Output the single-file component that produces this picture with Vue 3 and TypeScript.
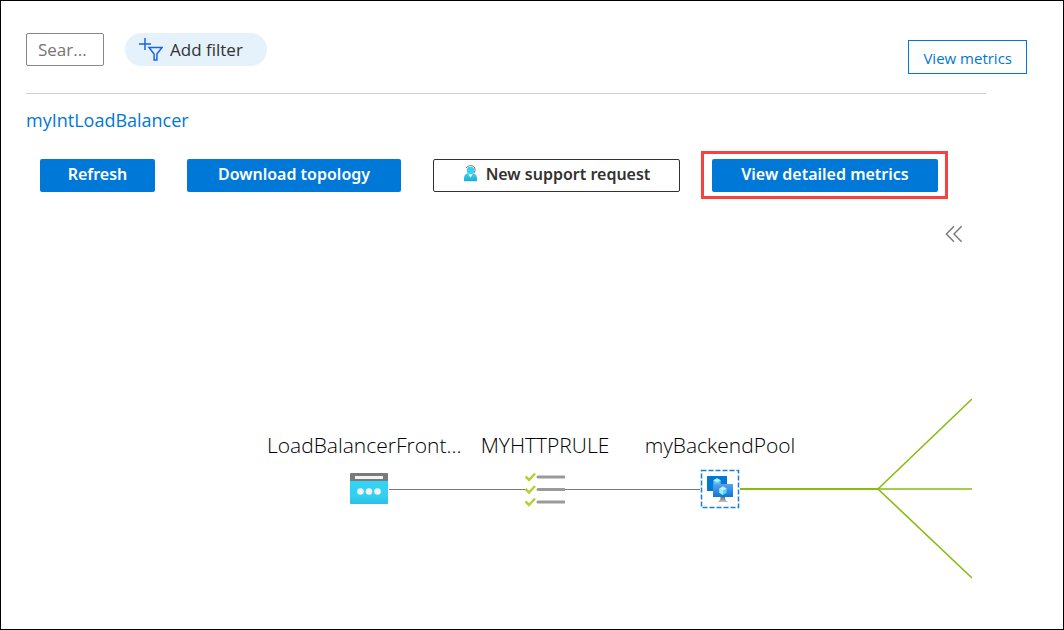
<script setup lang="ts">
interface TopologyNode {
  id: string
  label: string
  truncated: boolean
  x: number
  y: number
}

interface Link {
  x1: number
  y1: number
  x2: number
  y2: number
  kind: 'neutral' | 'trunk' | 'branch'
}

const nodes: TopologyNode[] = [
  { id: 'frontend', label: 'LoadBalancerFront...', truncated: true, x: 343, y: 269 },
  { id: 'rule', label: 'MYHTTPRULE', truncated: false, x: 519, y: 269 },
  { id: 'pool', label: 'myBackendPool', truncated: false, x: 694, y: 269 },
]

const links: Link[] = [
  { x1: 363, y1: 269, x2: 500, y2: 269, kind: 'neutral' },
  { x1: 539, y1: 269, x2: 674, y2: 269, kind: 'neutral' },
  { x1: 714, y1: 269, x2: 852, y2: 269, kind: 'trunk' },
  { x1: 852, y1: 269, x2: 946, y2: 269, kind: 'branch' },
  { x1: 852, y1: 269, x2: 946, y2: 179, kind: 'branch' },
  { x1: 852, y1: 269, x2: 946, y2: 358, kind: 'branch' },
]
</script>

<template>
  <main class="page">
    <header class="filters">
      <input class="search" type="text" placeholder="Sear..." aria-label="Search" />
      <button class="add-filter" type="button">
        <svg width="24" height="24" viewBox="0 0 24 24" aria-hidden="true">
          <g fill="none" stroke="#1a66d9">
            <path d="M6 0v12M0 6h12" stroke-width="1.500" />
            <path d="M10 9.500h13l-5.100 6.600v5.900h-2.800v-5.900z" stroke-width="1.500" />
          </g>
        </svg>
        <span>Add filter</span>
      </button>
      <button class="view-metrics" type="button">View metrics</button>
    </header>

    <section class="content">
      <a class="resource" href="#">myIntLoadBalancer</a>

      <div class="actions">
        <button class="action primary" type="button">Refresh</button>
        <button class="action primary" type="button">Download topology</button>
        <button class="action support" type="button">
          <svg width="15" height="18" viewBox="0 0 15 18" aria-hidden="true">
            <defs>
              <linearGradient id="person" x1="0" y1="0" x2="0" y2="1">
                <stop offset="0" stop-color="#35d3f3" />
                <stop offset="1" stop-color="#20acd2" />
              </linearGradient>
            </defs>
            <path d="M1 16.200v-2.500Q1 9 5 8.300h5q4 .7 4 5.400v2.500z" fill="url(#person)" />
            <path d="M5.200 8.800h4.600L7.500 12.800z" fill="#fff" />
            <circle cx="7.500" cy="5.500" r="3.700" fill="#32d4f5" />
            <path d="M3.300 3C5-.2 10.500-.2 11.800 3q1 3-.8 4.900" fill="none" stroke="#777" />
          </svg>
          <span>New support request</span>
        </button>
        <button class="action primary highlighted" type="button">View detailed metrics</button>
      </div>
    </section>

    <section class="topology" aria-label="Topology">
      <button class="collapse" type="button" aria-label="Collapse panel">
        <svg width="18" height="18" viewBox="0 0 18 18" aria-hidden="true">
          <path d="M9 1.200L1.400 9 9 16.800M16.600 1.200L9 9l7.600 7.800" fill="none" stroke="#777" stroke-width="1.400" />
        </svg>
      </button>

      <svg class="links" width="946" height="380" viewBox="0 0 946 380" aria-hidden="true">
        <line
          v-for="(link, i) in links"
          :key="i"
          :x1="link.x1"
          :y1="link.y1"
          :x2="link.x2"
          :y2="link.y2"
          :class="link.kind"
        />
      </svg>

      <div
        v-for="node in nodes"
        :key="node.id"
        class="node"
        :style="{ left: node.x + 'px', top: node.y + 'px' }"
      >
        <span class="label" :class="{ truncated: node.truncated }">{{ node.label }}</span>
        <svg v-if="node.id === 'frontend'" width="40" height="40" viewBox="0 0 40 40" aria-hidden="true">
          <defs>
            <linearGradient id="front" x1="0" y1="0" x2="0" y2="1">
              <stop offset="0" stop-color="#32d4f5" />
              <stop offset=".7" stop-color="#32cff0" />
              <stop offset="1" stop-color="#2bbfe2" />
            </linearGradient>
          </defs>
          <path d="M1 11h38v23q0 1-1 1H2q-1 0-1-1z" fill="url(#front)" />
          <path d="M1 12V5q0-1 1-1h36q1 0 1 1v7z" fill="#7a7a7a" />
          <path d="M6 7h28v3H6z" fill="#f2f2f2" />
          <g fill="#f2f2f2">
            <circle cx="11.500" cy="22.500" r="3.300" />
            <circle cx="20" cy="22.500" r="3.300" />
            <circle cx="28.500" cy="22.500" r="3.300" />
          </g>
        </svg>
        <svg v-else-if="node.id === 'rule'" width="40" height="40" viewBox="0 0 40 40" aria-hidden="true">
          <g fill="none" stroke="#999b9b" stroke-width="3" stroke-linecap="round">
            <path d="M13 8h26M13 20.500h26M13 33h26" />
          </g>
          <path
            d="M.5 7.500l3.500 3.500L10 4.500M.5 20l3.500 3.500L10 17M.5 32.500l3.500 3.500L10 29.500"
            fill="none"
            stroke="#b4d22d"
            stroke-width="2.500"
          />
        </svg>
        <svg v-else width="40" height="40" viewBox="0 0 40 40" aria-hidden="true">
          <defs>
            <linearGradient id="screen" x1="0" y1="1" x2="0" y2="0">
              <stop offset="0" stop-color="#0c78d4" />
              <stop offset="1" stop-color="#5ea0ef" />
            </linearGradient>
            <linearGradient id="stand" x1="0" y1="0" x2="0" y2="1">
              <stop offset="0" stop-color="#707070" />
              <stop offset="1" stop-color="#c4c4c4" />
            </linearGradient>
          </defs>
          <path d="M1.500 1.500h37v37h-37z" fill="#fff" stroke="#1a7fd4" stroke-width="1.500" stroke-dasharray="5 2" />
          <rect x="7" y="7" width="20" height="15" rx=".5" fill="#0078d4" />
          <path d="M17 9.300l3.700 2v4.500L17 18l-3.700-2.200v-4.500z" fill="#50c5f2" />
          <path d="M17 9.300l3.700 2-3.700 2.200-3.700-2.200z" fill="#b4ecfa" />
          <path d="M20.500 28H25q0 4 2.500 4.300v.7H18v-.7q2.500-.3 2.500-4.300z" fill="url(#stand)" />
          <rect x="13" y="15" width="20" height="13" rx=".5" fill="url(#screen)" />
          <path d="M23 17.500l3.700 2v4.300L23 26l-3.700-2.200v-4.300z" fill="#50d5f5" />
          <path d="M23 17.500l3.700 2-3.700 2.200-3.700-2.200z" fill="#c5f2fc" />
          <path d="M23 21.700V26l-3.700-2.200v-4.300z" fill="#9cebff" />
        </svg>
      </div>
    </section>
  </main>
</template>

<style>
body {
  margin: 0;
  background: #fff;
}
</style>

<style scoped>
.page {
  box-sizing: border-box;
  min-height: 100vh;
  padding: 32px 25px 0;
  border: 1px solid #000;
  font-family: "Open Sans", "Noto Sans", sans-serif;
  color: #323130;
}

button,
input {
  box-sizing: border-box;
  margin: 0;
  font-family: inherit;
}

button {
  cursor: pointer;
}

.filters {
  display: flex;
  align-items: flex-start;
  margin-right: 11px;
}

.search {
  width: 78px;
  height: 33px;
  padding: 0 11px;
  border: 1px solid #8a8886;
  border-radius: 2px;
  font-size: 17px;
  color: #323130;
}

.search::placeholder {
  color: #767472;
  opacity: 1;
}

.add-filter {
  display: flex;
  align-items: center;
  gap: 7px;
  height: 33px;
  margin-left: 21px;
  padding: 0 24px 0 14px;
  border: 0;
  border-radius: 17px;
  background: #e5f1fb;
  font-size: 17px;
  color: #323130;
}

.view-metrics {
  height: 34px;
  margin: 7px 0 0 auto;
  padding: 2px 14px 0;
  border: 1px solid #0078d4;
  background: #fff;
  font-size: 15px;
  color: #0078d4;
}

.content {
  margin-right: 52px;
  margin-top: 19px;
  border-top: 1px solid #d2d0ce;
}

.resource {
  display: block;
  width: fit-content;
  margin-top: 14px;
  font-size: 18px;
  line-height: 24px;
  color: #0078d4;
  text-decoration: none;
}

.actions {
  display: grid;
  grid-template-columns: 115px 214px 247px 226px;
  gap: 32px;
  margin: 27px 0 0 14px;
}

.action {
  display: flex;
  align-items: center;
  justify-content: center;
  gap: 8px;
  height: 33px;
  padding: 0 0 4px;
  border: 0;
  border-radius: 2px;
  font-family: "Noto Sans", "Open Sans", sans-serif;
  font-size: 16px;
  font-weight: 600;
  white-space: nowrap;
}

.primary {
  background: #0078d7;
  color: #fff;
}

.support {
  border: 1px solid #323130;
  background: #fff;
  color: #323130;
}

.highlighted {
  position: relative;
}

.highlighted::after {
  content: "";
  position: absolute;
  inset: -8px -10px -7px -11px;
  border: 3px solid #f94141;
}

.topology {
  position: relative;
  box-sizing: border-box;
  min-height: 380px;
  margin-top: 28px;
  padding-top: 5px;
}

.collapse {
  display: block;
  width: 18px;
  height: 18px;
  margin: 0 75px 0 auto;
  padding: 0;
  border: 0;
  background: none;
}

.collapse svg {
  display: block;
}

.links {
  position: absolute;
  left: 0;
  top: 0;
}

.neutral {
  stroke: #7a7a7a;
  stroke-width: 1;
  shape-rendering: crispEdges;
}

.trunk {
  stroke: #86bc0c;
  stroke-width: 2;
}

.branch {
  stroke: #86bc0c;
  stroke-width: 1.6;
}

.node {
  position: absolute;
  display: flex;
  flex-direction: column;
  align-items: center;
  gap: 9px;
  width: 0;
  margin-top: -59px;
}

.node svg {
  flex: none;
}

.label {
  font-size: 21px;
  font-weight: 300;
  line-height: 30px;
  white-space: nowrap;
  color: #000;
}

.truncated {
  width: 204px;
}
</style>
